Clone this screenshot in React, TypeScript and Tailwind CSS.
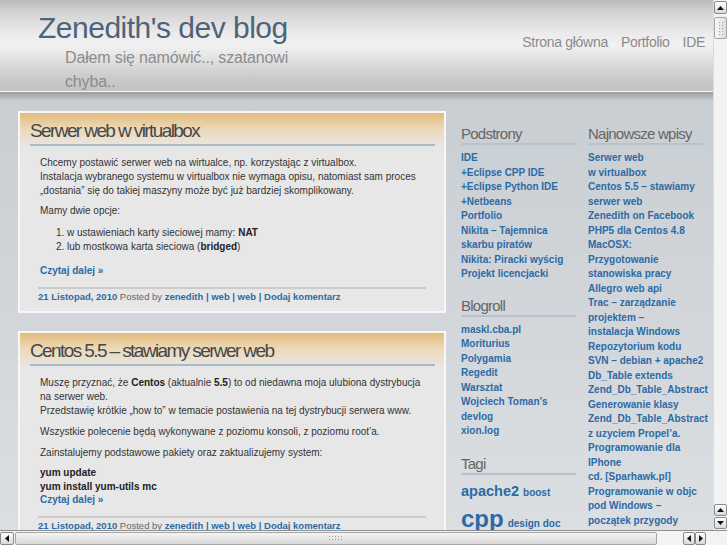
import React from "react";

const PAGES = [
  "IDE",
  "+Eclipse CPP IDE",
  "+Eclipse Python IDE",
  "+Netbeans",
  "Portfolio",
  "Nikita – Tajemnica\nskarbu piratów",
  "Nikita: Piracki wyścig",
  "Projekt licencjacki",
];

const BLOGROLL = ["maskl.cba.pl", "Moriturius", "Polygamia", "Regedit", "Warsztat", "Wojciech Toman’s\ndevlog", "xion.log"];

const RECENT = [
  "Serwer web\nw virtualbox",
  "Centos 5.5 – stawiamy\nserwer web",
  "Zenedith on Facebook",
  "PHP5 dla Centos 4.8",
  "MacOSX:\nPrzygotowanie\nstanowiska pracy",
  "Allegro web api",
  "Trac – zarządzanie\nprojektem –\ninstalacja Windows",
  "Repozytorium kodu\nSVN – debian + apache2",
  "Db_Table extends\nZend_Db_Table_Abstract",
  "Generowanie klasy\nZend_Db_Table_Abstract\nz uzyciem Propel’a.",
  "Programowanie dla\nIPhone",
  "cd. [Sparhawk.pl]",
  "Programowanie w objc\npod Windows –\npoczątek przygody",
];

function Arrow({ dir }: { dir: "up" | "down" | "left" | "right" }) {
  const d = {
    up: "M0 4 L3.5 0 L7 4Z",
    down: "M0 0 L3.5 4 L7 0Z",
    left: "M4 0 L0 3.5 L4 7Z",
    right: "M0 0 L4 3.5 L0 7Z",
  }[dir];
  const vertical = dir === "up" || dir === "down";
  return (
    <svg width={vertical ? 7 : 4} height={vertical ? 4 : 7} viewBox={vertical ? "0 0 7 4" : "0 0 4 7"}>
      <path d={d} fill="#111" />
    </svg>
  );
}

function ScrollBtn({ dir, className }: { dir: "up" | "down" | "left" | "right"; className: string }) {
  return (
    <div
      className={`flex items-center justify-center rounded-[2px] border border-[#8a8a8a] bg-[linear-gradient(to_bottom,#ffffff,#d9d9d9)] ${className}`}
    >
      <Arrow dir={dir} />
    </div>
  );
}

function Heading({ children }: { children: React.ReactNode }) {
  return (
    <h3 className="border-b-2 border-[#b5c3cc] text-[15px] leading-[18px] tracking-[-0.75px] text-[#666]">{children}</h3>
  );
}

function LinkList({ items }: { items: string[] }) {
  return (
    <ul className="mt-[6px]">
      {items.map((t) => (
        <li key={t} className="whitespace-pre text-[10px] font-bold leading-[14.5px] text-[#2c6aa5]">
          {t}
        </li>
      ))}
    </ul>
  );
}

function Meta() {
  return (
    <div className="mt-[1px] whitespace-nowrap text-[9.5px] leading-[14px] text-[#666]">
      <span className="font-bold text-[#2c6aa5]">21 Listopad, 2010</span> Posted by{" "}
      <span className="font-bold text-[#2c6aa5]">zenedith</span>
      <span className="font-bold text-[#2c6aa5]"> | web | web | Dodaj komentarz</span>
    </div>
  );
}

function Post({ title, children, gap }: { title: string; children: React.ReactNode; gap: string }) {
  return (
    <article className={`border-2 border-[#f7f7f7] bg-[#e7e7e7] ${gap}`}>
      <div className="bg-[linear-gradient(to_bottom,#e4ba7a,#ebd8b6_45%,#e8e6e2)]">
        <h2 className="ml-[10px] mr-[9px] whitespace-nowrap border-b-2 border-[#a9bac5] pt-[6px] pb-[1px] text-[19px] leading-[24px] tracking-[-1.6px] text-[#474747]">
          {title}
        </h2>
      </div>
      <div className="pl-[20px] pr-[18px] pt-[10px] text-[10px] leading-[14px] text-[#333]">{children}</div>
      <div className="px-[18px] pb-[7px]">
        <div className="mt-[9px] h-[2px] bg-[#cccccc]" />
        <Meta />
      </div>
    </article>
  );
}

export default function App() {
  return (
    <div className="flex h-[545px] w-[727px] flex-col overflow-hidden bg-[#d0d4d8] font-['Liberation_Sans',Arial,sans-serif]">
      <div className="flex h-[530px]">
        {/* page */}
        <div className="flex w-[713px] flex-col overflow-hidden">
          {/* header */}
          <header className="flex h-[91px] shrink-0 justify-between bg-[linear-gradient(to_bottom,#b9b9b9_0%,#d2d2d2_12%,#ececec_38%,#f1f1f1_50%,#e2e2e2_65%,#cbcbcb_85%,#c2c2c2_100%)]">
            <div className="pl-[38px] pt-[10px]">
              <h1 className="text-[30px] leading-[36px] tracking-[-0.5px] text-[#4e6379]">Zenedith's dev blog</h1>
              <p className="ml-[27px] w-[235px] text-[16px] leading-[24px] tracking-[-0.15px] text-[#8c8c8c]">
                Dałem się namówić.., szatanowi
                <br />
                chyba..
              </p>
            </div>
            <nav className="flex gap-[13px] pr-[8px] pt-[32px] text-[14px] leading-[20px] tracking-[-0.3px] text-[#8a8a8a]">
              <span>Strona główna</span>
              <span>Portfolio</span>
              <span>IDE</span>
            </nav>
          </header>
          <div className="h-[1px] shrink-0 bg-[#f4f4f4]" />
          <div className="h-[8px] shrink-0 bg-[linear-gradient(to_bottom,#9c9c9c,#c3c7cb)]" />

          {/* content */}
          <div className="flex flex-1 bg-[linear-gradient(to_bottom,#c9ced3,#dcdfe2)]">
            <main className="ml-[18px] w-[428px] shrink-0 pt-[11px]">
              <Post title="Serwer web w virtualbox" gap="">
                <p>
                  Chcemy postawić serwer web na wirtualce, np. korzystając z virtualbox.
                  <br />
                  Instalacja wybranego systemu w virtualbox nie wymaga opisu, natomiast sam proces
                  <br />
                  „dostania” się do takiej maszyny może być już bardziej skomplikowany.
                </p>
                <p className="mt-[6px]">Mamy dwie opcje:</p>
                <ol className="mt-[8px] list-decimal pl-[27px]">
                  <li>
                    w ustawieniach karty sieciowej mamy: <b className="text-[#222]">NAT</b>
                  </li>
                  <li>
                    lub mostkowa karta sieciowa (<b className="text-[#222]">bridged</b>)
                  </li>
                </ol>
                <div className="mt-[10px] font-bold text-[#2c6aa5]">Czytaj dalej »</div>
              </Post>

              <Post title="Centos 5.5 – stawiamy serwer web" gap="mt-[18px]">
                <p>
                  Muszę przyznać, że <b className="text-[#222]">Centos</b> (aktualnie <b className="text-[#222]">5.5</b>) to od
                  niedawna moja ulubiona dystrybucja
                  <br />
                  na serwer web.
                  <br />
                  Przedstawię krótkie „how to” w temacie postawienia na tej dystrybucji serwera www.
                </p>
                <p className="mt-[7px]">Wszystkie polecenie będą wykonywane z poziomu konsoli, z poziomu root’a.</p>
                <p className="mt-[7px]">Zainstalujemy podstawowe pakiety oraz zaktualizujemy system:</p>
                <p className="mt-[6px] font-bold text-[#222]">
                  yum update
                  <br />
                  yum install yum-utils mc
                </p>
                <div className="-mt-[1px] font-bold text-[#2c6aa5]">Czytaj dalej »</div>
              </Post>
            </main>

            {/* sidebar */}
            <aside className="ml-[15px] w-[115px] shrink-0 pt-[25px]">
              <Heading>Podstrony</Heading>
              <LinkList items={PAGES} />
              <div className="mt-[15px]">
                <Heading>Blogroll</Heading>
                <LinkList items={BLOGROLL} />
              </div>
              <div className="mt-[16px]">
                <Heading>Tagi</Heading>
                <div className="mt-[5px] flex items-baseline gap-[4px] font-bold text-[#2c6aa5]">
                  <span className="text-[14.5px] leading-[22px]">apache2</span>
                  <span className="text-[10px]">boost</span>
                </div>
                <div className="mt-[3px] flex items-baseline gap-[4px] font-bold text-[#2c6aa5]">
                  <span className="text-[24px] leading-[28px]">cpp</span>
                  <span className="text-[10px]">design doc</span>
                </div>
              </div>
            </aside>

            <aside className="ml-[12px] w-[115px] shrink-0 pt-[25px]">
              <Heading>Najnowsze wpisy</Heading>
              <LinkList items={RECENT} />
            </aside>
          </div>
        </div>

        {/* vertical scrollbar */}
        <div className="flex w-[14px] flex-col border-l border-[#dcdcdc] bg-[#f3f3f3] py-[1px]">
          <ScrollBtn dir="up" className="h-[13px] w-[13px]" />
          <div className="mt-[3px] h-[22px] w-[13px] rounded-[2px] border border-[#a5a5a5] bg-[linear-gradient(to_right,#f7f7f7,#dedede)] p-[3px]">
            <div className="h-full w-full bg-[radial-gradient(#9c9c9c_0.7px,transparent_0.9px)] bg-[length:3px_3px]" />
          </div>
          <div className="flex-1" />
          <ScrollBtn dir="up" className="h-[12px] w-[13px]" />
          <ScrollBtn dir="down" className="mt-[1px] h-[12px] w-[13px]" />
        </div>
      </div>

      {/* horizontal scrollbar */}
      <div className="flex h-[15px] items-center border-t border-[#8f8f8f] bg-[#f3f3f3]">
        <ScrollBtn dir="left" className="h-[13px] w-[14px]" />
        <div className="ml-[1px] flex h-[13px] w-[642px] items-center justify-center rounded-[2px] border border-[#a5a5a5] bg-[linear-gradient(to_bottom,#f4f4f4,#d8d8d8)]">
          <div className="h-[7px] w-[16px] bg-[radial-gradient(#9c9c9c_0.7px,transparent_0.9px)] bg-[length:3px_3px]" />
        </div>
        <div className="w-[26px]" />
        <ScrollBtn dir="left" className="h-[13px] w-[12px]" />
        <ScrollBtn dir="right" className="h-[13px] w-[11px]" />
        <div className="flex-1" />
      </div>
    </div>
  );
}
